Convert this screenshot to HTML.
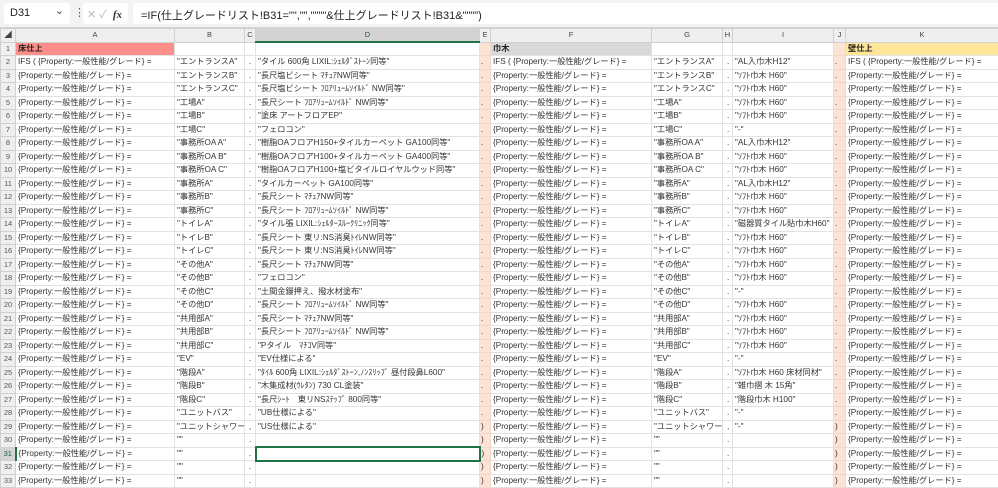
<!DOCTYPE html>
<html><head><meta charset="utf-8"><style>
*{margin:0;padding:0;box-sizing:border-box}
body{width:998px;height:482px;overflow:hidden;background:#fff;font-family:"Liberation Sans","Noto Sans CJK JP",sans-serif;position:relative}
.fb{position:absolute;left:0;top:0;width:998px;height:28px;background:#f3f3f3;border-bottom:1px solid #d4d4d4}
.nb{position:absolute;left:4px;top:3px;width:66px;height:21px;background:#fff;border-radius:3px;font-size:11px;padding:4px 0 0 6px;color:#222}
.nb:after{content:"⌄";position:absolute;right:6px;top:1px;font-size:11px;color:#444}
.dots{position:absolute;left:74px;top:6px;font-size:11px;color:#555}
.ic{position:absolute;left:83px;top:3px;width:45px;height:21px;background:#fff;border-radius:3px;font-size:11px;color:#bbb;padding:3px 0 0 4px}
.ic i{font-family:"Liberation Serif",serif;color:#333;font-weight:bold;margin-left:3px}
.fx{position:absolute;left:133px;top:3px;width:870px;height:21px;background:#fff;border-radius:3px;font-size:11px;padding:4px 0 0 8px;color:#222}
table{position:absolute;left:0;top:28px;border-collapse:collapse;table-layout:fixed;width:998px;font-size:8.2px;color:#333}
td,th{height:13.5px;border:1px solid #e2e2e2;white-space:nowrap;overflow:hidden;padding:0 0 0 2px;font-weight:normal;text-align:left;line-height:12px}
tr.h td,tr.h th{height:13px;background:#efefef;text-align:center;color:#444;font-size:7.5px;border-color:#d0d0d0;padding:0}
tr.h td.sel{background:#d3d3d3;border-bottom:2px solid #217346;color:#1b5e36}
th{background:#efefef;text-align:center;color:#555;font-size:7.5px;padding:0;border-color:#d0d0d0}
th.sel{background:#d3d3d3;color:#1b5e36;border-right:2px solid #217346}
td.e{background:#fbe3d6;border-color:#f3d7c8;padding:0 0 0 1px}
td.c{padding-left:4px}
.r1 td{font-weight:bold;color:#222}
td.red{background:#ff8f8a}td.gr{background:#d9d9d9}td.ye{background:#ffe699}
td.cur{border:2px solid #217346}
</style></head><body>
<div class="fb"><div class="nb">D31</div><div class="dots">⋮</div><div class="ic">✕ ✓ <i>fx</i></div><div class="fx">=IF(仕上グレードリスト!B31="","",""""&amp;仕上グレードリスト!B31&amp;"""")</div></div>
<table>
<colgroup><col style="width:15px"><col style="width:159px"><col style="width:70px"><col style="width:11px"><col style="width:224px"><col style="width:11px"><col style="width:161px"><col style="width:71px"><col style="width:10px"><col style="width:101px"><col style="width:12px"><col style="width:153px"></colgroup>
<tr class="h"><th>◢</th><td>A</td><td>B</td><td>C</td><td class="sel">D</td><td>E</td><td>F</td><td>G</td><td>H</td><td>I</td><td>J</td><td>K</td></tr>
<tr class="r1"><th>1</th><td class="red">床仕上</td><td></td><td></td><td></td><td class="e"></td><td class="gr">巾木</td><td></td><td></td><td></td><td class="e"></td><td class="ye">壁仕上</td></tr>
<tr><th>2</th><td>IFS ( {Property:一般性能/グレード} =</td><td>"エントランスA"</td><td class="c">.</td><td>"タイル 600角 LIXIL:ｼｪﾙﾀﾞｽﾄｰﾝ同等"</td><td class="e">.</td><td>IFS ( {Property:一般性能/グレード} =</td><td>"エントランスA"</td><td class="c">.</td><td>"AL入巾木H12"</td><td class="e">.</td><td>IFS ( {Property:一般性能/グレード} =</td></tr>
<tr><th>3</th><td>{Property:一般性能/グレード} =</td><td>"エントランスB"</td><td class="c">.</td><td>"長尺塩ビシート ﾏﾁｭｱNW同等"</td><td class="e">.</td><td> {Property:一般性能/グレード} =</td><td>"エントランスB"</td><td class="c">.</td><td>"ｿﾌﾄ巾木 H60"</td><td class="e">.</td><td> {Property:一般性能/グレード} =</td></tr>
<tr><th>4</th><td>{Property:一般性能/グレード} =</td><td>"エントランスC"</td><td class="c">.</td><td>"長尺塩ビシート ﾌﾛｱﾘｭｰﾑｿｲﾙﾄﾞ NW同等"</td><td class="e">.</td><td> {Property:一般性能/グレード} =</td><td>"エントランスC"</td><td class="c">.</td><td>"ｿﾌﾄ巾木 H60"</td><td class="e">.</td><td> {Property:一般性能/グレード} =</td></tr>
<tr><th>5</th><td>{Property:一般性能/グレード} =</td><td>"工場A"</td><td class="c">.</td><td>"長尺シート ﾌﾛｱﾘｭｰﾑｿｲﾙﾄﾞ NW同等"</td><td class="e">.</td><td>{Property:一般性能/グレード} =</td><td>"工場A"</td><td class="c">.</td><td>"ｿﾌﾄ巾木 H60"</td><td class="e">.</td><td>{Property:一般性能/グレード} =</td></tr>
<tr><th>6</th><td>{Property:一般性能/グレード} =</td><td>"工場B"</td><td class="c">.</td><td>"塗床 アートフロアEP"</td><td class="e">.</td><td>{Property:一般性能/グレード} =</td><td>"工場B"</td><td class="c">.</td><td>"ｿﾌﾄ巾木 H60"</td><td class="e">.</td><td>{Property:一般性能/グレード} =</td></tr>
<tr><th>7</th><td>{Property:一般性能/グレード} =</td><td>"工場C"</td><td class="c">.</td><td>"フェロコン"</td><td class="e">.</td><td>{Property:一般性能/グレード} =</td><td>"工場C"</td><td class="c">.</td><td>"-"</td><td class="e">.</td><td>{Property:一般性能/グレード} =</td></tr>
<tr><th>8</th><td>{Property:一般性能/グレード} =</td><td>"事務所OA A"</td><td class="c">.</td><td>"樹脂OAフロアH150+タイルカーペット GA100同等"</td><td class="e">.</td><td>{Property:一般性能/グレード} =</td><td>"事務所OA A"</td><td class="c">.</td><td>"AL入巾木H12"</td><td class="e">.</td><td>{Property:一般性能/グレード} =</td></tr>
<tr><th>9</th><td>{Property:一般性能/グレード} =</td><td>"事務所OA B"</td><td class="c">.</td><td>"樹脂OAフロアH100+タイルカーペット GA400同等"</td><td class="e">.</td><td>{Property:一般性能/グレード} =</td><td>"事務所OA B"</td><td class="c">.</td><td>"ｿﾌﾄ巾木 H60"</td><td class="e">.</td><td>{Property:一般性能/グレード} =</td></tr>
<tr><th>10</th><td>{Property:一般性能/グレード} =</td><td>"事務所OA C"</td><td class="c">.</td><td>"樹脂OAフロアH100+塩ビタイルロイヤルウッド同等"</td><td class="e">.</td><td>{Property:一般性能/グレード} =</td><td>"事務所OA C"</td><td class="c">.</td><td>"ｿﾌﾄ巾木 H60"</td><td class="e">.</td><td>{Property:一般性能/グレード} =</td></tr>
<tr><th>11</th><td>{Property:一般性能/グレード} =</td><td>"事務所A"</td><td class="c">.</td><td>"タイルカーペット GA100同等"</td><td class="e">.</td><td>{Property:一般性能/グレード} =</td><td>"事務所A"</td><td class="c">.</td><td>"AL入巾木H12"</td><td class="e">.</td><td>{Property:一般性能/グレード} =</td></tr>
<tr><th>12</th><td>{Property:一般性能/グレード} =</td><td>"事務所B"</td><td class="c">.</td><td>"長尺シート ﾏﾁｭｱNW同等"</td><td class="e">.</td><td>{Property:一般性能/グレード} =</td><td>"事務所B"</td><td class="c">.</td><td>"ｿﾌﾄ巾木 H60"</td><td class="e">.</td><td>{Property:一般性能/グレード} =</td></tr>
<tr><th>13</th><td>{Property:一般性能/グレード} =</td><td>"事務所C"</td><td class="c">.</td><td>"長尺シート ﾌﾛｱﾘｭｰﾑｿｲﾙﾄﾞ NW同等"</td><td class="e">.</td><td>{Property:一般性能/グレード} =</td><td>"事務所C"</td><td class="c">.</td><td>"ｿﾌﾄ巾木 H60"</td><td class="e">.</td><td>{Property:一般性能/グレード} =</td></tr>
<tr><th>14</th><td>{Property:一般性能/グレード} =</td><td>"トイレA"</td><td class="c">.</td><td>"タイル張 LIXIL:ｼｪﾙﾀｰｽﾙｰｸﾘﾆｯｸ同等"</td><td class="e">.</td><td>{Property:一般性能/グレード} =</td><td>"トイレA"</td><td class="c">.</td><td>"磁器質タイル貼巾木H60"</td><td class="e">.</td><td>{Property:一般性能/グレード} =</td></tr>
<tr><th>15</th><td>{Property:一般性能/グレード} =</td><td>"トイレB"</td><td class="c">.</td><td>"長尺シート 東リ:NS消臭ﾄｲﾚNW同等"</td><td class="e">.</td><td>{Property:一般性能/グレード} =</td><td>"トイレB"</td><td class="c">.</td><td>"ｿﾌﾄ巾木 H60"</td><td class="e">.</td><td>{Property:一般性能/グレード} =</td></tr>
<tr><th>16</th><td>{Property:一般性能/グレード} =</td><td>"トイレC"</td><td class="c">.</td><td>"長尺シート 東リ:NS消臭ﾄｲﾚNW同等"</td><td class="e">.</td><td>{Property:一般性能/グレード} =</td><td>"トイレC"</td><td class="c">.</td><td>"ｿﾌﾄ巾木 H60"</td><td class="e">.</td><td>{Property:一般性能/グレード} =</td></tr>
<tr><th>17</th><td>{Property:一般性能/グレード} =</td><td>"その他A"</td><td class="c">.</td><td>"長尺シート ﾏﾁｭｱNW同等"</td><td class="e">.</td><td>{Property:一般性能/グレード} =</td><td>"その他A"</td><td class="c">.</td><td>"ｿﾌﾄ巾木 H60"</td><td class="e">.</td><td>{Property:一般性能/グレード} =</td></tr>
<tr><th>18</th><td>{Property:一般性能/グレード} =</td><td>"その他B"</td><td class="c">.</td><td>"フェロコン"</td><td class="e">.</td><td>{Property:一般性能/グレード} =</td><td>"その他B"</td><td class="c">.</td><td>"ｿﾌﾄ巾木 H60"</td><td class="e">.</td><td>{Property:一般性能/グレード} =</td></tr>
<tr><th>19</th><td>{Property:一般性能/グレード} =</td><td>"その他C"</td><td class="c">.</td><td>"土間金鏝押え、撥水材塗布"</td><td class="e">.</td><td>{Property:一般性能/グレード} =</td><td>"その他C"</td><td class="c">.</td><td>"-"</td><td class="e">.</td><td>{Property:一般性能/グレード} =</td></tr>
<tr><th>20</th><td>{Property:一般性能/グレード} =</td><td>"その他D"</td><td class="c">.</td><td>"長尺シート ﾌﾛｱﾘｭｰﾑｿｲﾙﾄﾞ NW同等"</td><td class="e">.</td><td>{Property:一般性能/グレード} =</td><td>"その他D"</td><td class="c">.</td><td>"ｿﾌﾄ巾木 H60"</td><td class="e">.</td><td>{Property:一般性能/グレード} =</td></tr>
<tr><th>21</th><td>{Property:一般性能/グレード} =</td><td>"共用部A"</td><td class="c">.</td><td>"長尺シート ﾏﾁｭｱNW同等"</td><td class="e">.</td><td>{Property:一般性能/グレード} =</td><td>"共用部A"</td><td class="c">.</td><td>"ｿﾌﾄ巾木 H60"</td><td class="e">.</td><td>{Property:一般性能/グレード} =</td></tr>
<tr><th>22</th><td>{Property:一般性能/グレード} =</td><td>"共用部B"</td><td class="c">.</td><td>"長尺シート ﾌﾛｱﾘｭｰﾑｿｲﾙﾄﾞ NW同等"</td><td class="e">.</td><td>{Property:一般性能/グレード} =</td><td>"共用部B"</td><td class="c">.</td><td>"ｿﾌﾄ巾木 H60"</td><td class="e">.</td><td>{Property:一般性能/グレード} =</td></tr>
<tr><th>23</th><td>{Property:一般性能/グレード} =</td><td>"共用部C"</td><td class="c">.</td><td>"Pタイル　ﾏﾁｺV同等"</td><td class="e">.</td><td>{Property:一般性能/グレード} =</td><td>"共用部C"</td><td class="c">.</td><td>"ｿﾌﾄ巾木 H60"</td><td class="e">.</td><td>{Property:一般性能/グレード} =</td></tr>
<tr><th>24</th><td>{Property:一般性能/グレード} =</td><td>"EV"</td><td class="c">.</td><td>"EV仕様による"</td><td class="e">.</td><td>{Property:一般性能/グレード} =</td><td>"EV"</td><td class="c">.</td><td>"-"</td><td class="e">.</td><td>{Property:一般性能/グレード} =</td></tr>
<tr><th>25</th><td>{Property:一般性能/グレード} =</td><td>"階段A"</td><td class="c">.</td><td>"ﾀｲﾙ 600角 LIXIL:ｼｪﾙﾀﾞｽﾄｰﾝ,ﾉﾝｽﾘｯﾌﾟ 昼付段鼻L600"</td><td class="e">.</td><td>{Property:一般性能/グレード} =</td><td>"階段A"</td><td class="c">.</td><td>"ｿﾌﾄ巾木 H60 床材同材"</td><td class="e">.</td><td>{Property:一般性能/グレード} =</td></tr>
<tr><th>26</th><td>{Property:一般性能/グレード} =</td><td>"階段B"</td><td class="c">.</td><td>"木集成材(ｳﾚﾀﾝ) 730 CL塗装"</td><td class="e">.</td><td>{Property:一般性能/グレード} =</td><td>"階段B"</td><td class="c">.</td><td>"雑巾摺 木 15角"</td><td class="e">.</td><td>{Property:一般性能/グレード} =</td></tr>
<tr><th>27</th><td>{Property:一般性能/グレード} =</td><td>"階段C"</td><td class="c">.</td><td>"長尺ｼｰﾄ　東リNSｽﾃｯﾌﾟ 800同等"</td><td class="e">.</td><td>{Property:一般性能/グレード} =</td><td>"階段C"</td><td class="c">.</td><td>"階段巾木 H100"</td><td class="e">.</td><td>{Property:一般性能/グレード} =</td></tr>
<tr><th>28</th><td>{Property:一般性能/グレード} =</td><td>"ユニットバス"</td><td class="c">.</td><td>"UB仕様による"</td><td class="e">.</td><td>{Property:一般性能/グレード} =</td><td>"ユニットバス"</td><td class="c">.</td><td>"-"</td><td class="e">.</td><td>{Property:一般性能/グレード} =</td></tr>
<tr><th>29</th><td>{Property:一般性能/グレード} =</td><td>"ユニットシャワー"</td><td class="c">,</td><td>"US仕様による"</td><td class="e">)</td><td>{Property:一般性能/グレード} =</td><td>"ユニットシャワー"</td><td class="c">,</td><td>"-"</td><td class="e">)</td><td>{Property:一般性能/グレード} =</td></tr>
<tr><th>30</th><td>{Property:一般性能/グレード} =</td><td>""</td><td class="c">.</td><td></td><td class="e">)</td><td>{Property:一般性能/グレード} =</td><td>""</td><td class="c">.</td><td></td><td class="e">)</td><td>{Property:一般性能/グレード} =</td></tr>
<tr><th class="sel">31</th><td>{Property:一般性能/グレード} =</td><td>""</td><td class="c">.</td><td class="cur"></td><td class="e">)</td><td>{Property:一般性能/グレード} =</td><td>""</td><td class="c">.</td><td></td><td class="e">)</td><td>{Property:一般性能/グレード} =</td></tr>
<tr><th>32</th><td>{Property:一般性能/グレード} =</td><td>""</td><td class="c">.</td><td></td><td class="e">)</td><td>{Property:一般性能/グレード} =</td><td>""</td><td class="c">.</td><td></td><td class="e">)</td><td>{Property:一般性能/グレード} =</td></tr>
<tr><th>33</th><td>{Property:一般性能/グレード} =</td><td>""</td><td class="c">.</td><td></td><td class="e">)</td><td>{Property:一般性能/グレード} =</td><td>""</td><td class="c">.</td><td></td><td class="e">)</td><td>{Property:一般性能/グレード} =</td></tr>
</table>
</body></html>
